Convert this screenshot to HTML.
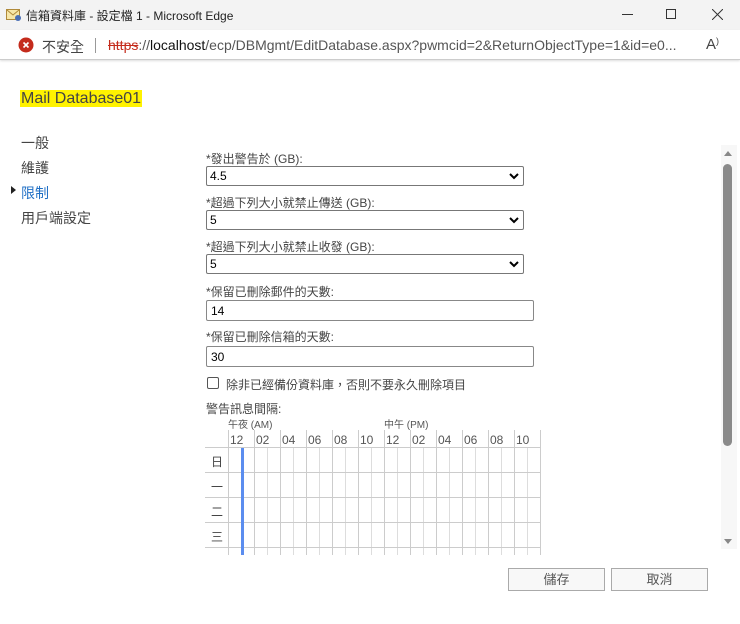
<!DOCTYPE html>
<html><head><meta charset="utf-8"><style>
*{margin:0;padding:0;box-sizing:border-box}
body{width:740px;height:624px;position:relative;background:#fff;font-family:"Liberation Sans","Noto Sans CJK TC",sans-serif;color:#333;overflow:hidden}
.a{position:absolute;white-space:nowrap}
.lbl{font-size:12px;color:#444}
.sel{position:absolute;left:206px;width:318px;height:20px;border:1px solid #777;border-radius:2px;font-size:12px;color:#000;padding:2px 3px}
.sel svg{position:absolute;right:4px;top:6px}
.inp{position:absolute;left:206px;width:328px;height:21px;border:1px solid #888;border-radius:2px;font-size:12px;color:#000;padding:3px 4px}
.nav{font-size:14px;color:#444;left:21px}
.btn{position:absolute;top:568px;width:97px;height:23px;border:1px solid #aaa;background:#f8f8f8;font-size:13px;color:#555;text-align:center;line-height:21px}
</style></head><body>
<div class="a" style="left:0;top:0;width:740px;height:30px;background:#f3f3f3"></div>
<svg class="a" style="left:6px;top:8px" width="16" height="14"><rect x="0.5" y="1.5" width="13" height="10" fill="#f7e7a8" stroke="#b08a3a"/><path d="M1 2 L7 7 L13 2" stroke="#b08a3a" fill="none"/><circle cx="12" cy="10" r="3" fill="#4a6fb5"/></svg>
<div class="a" style="left:26px;top:7px;font-size:12px;color:#222">信箱資料庫 - 設定檔 1 - Microsoft Edge</div>
<div class="a" style="left:622px;top:14px;width:11px;height:1px;background:#333"></div>
<div class="a" style="left:666px;top:9px;width:10px;height:10px;border:1px solid #333"></div>
<svg class="a" style="left:712px;top:9px" width="11" height="11"><path d="M0 0L11 11M11 0L0 11" stroke="#333"/></svg>
<div class="a" style="left:0;top:30px;width:740px;height:30px;background:#fff;border-bottom:1px solid #ccc;box-shadow:0 1px 2px #ddd"></div>
<svg class="a" style="left:18px;top:37px" width="16" height="16"><circle cx="8" cy="8" r="7.5" fill="#c42b1c"/><path d="M5.5 5.5L10.5 10.5M10.5 5.5L5.5 10.5" stroke="#fff" stroke-width="1.6"/></svg>
<div class="a" style="left:42px;top:37px;font-size:14px;color:#444">不安全</div>
<div class="a" style="left:95px;top:38px;width:1px;height:15px;background:#999"></div>
<div class="a" style="left:108px;top:37px;font-size:14px;color:#555"><span style="color:#c42b1c;text-decoration:line-through">https</span>://<span style="color:#111">localhost</span>/ecp/DBMgmt/EditDatabase.aspx?pwmcid=2&amp;ReturnObjectType=1&amp;id=e0...</div>
<div class="a" style="left:706px;top:36px;font-size:15px;color:#444">A<span style="font-size:9px;vertical-align:top">)</span></div>
<div class="a" style="left:20px;top:90px;font-size:16px;color:#444;background:#fff200;padding:0 1px;line-height:17px">Mail Database01</div>
<div class="a nav" style="top:133px">一般</div>
<div class="a nav" style="top:158px">維護</div>
<div class="a" style="left:11px;top:186px;width:0;height:0;border-left:5px solid #222;border-top:4px solid transparent;border-bottom:4px solid transparent"></div>
<div class="a nav" style="top:183px;color:#1f6fc5">限制</div>
<div class="a nav" style="top:208px">用戶端設定</div>

<div class="a lbl" style="left:206px;top:150px">*發出警告於 (GB):</div>
<div class="sel" style="top:166px">4.5<svg width="10" height="7"><path d="M1 1L5 5L9 1" stroke="#000" stroke-width="2" fill="none"/></svg></div>
<div class="a lbl" style="left:206px;top:194px">*超過下列大小就禁止傳送 (GB):</div>
<div class="sel" style="top:210px">5<svg width="10" height="7"><path d="M1 1L5 5L9 1" stroke="#000" stroke-width="2" fill="none"/></svg></div>
<div class="a lbl" style="left:206px;top:238px">*超過下列大小就禁止收發 (GB):</div>
<div class="sel" style="top:254px">5<svg width="10" height="7"><path d="M1 1L5 5L9 1" stroke="#000" stroke-width="2" fill="none"/></svg></div>
<div class="a lbl" style="left:206px;top:283px">*保留已刪除郵件的天數:</div>
<div class="inp" style="top:300px">14</div>
<div class="a lbl" style="left:206px;top:328px">*保留已刪除信箱的天數:</div>
<div class="inp" style="top:346px">30</div>
<div class="a" style="left:207px;top:377px;width:12px;height:12px;border:1px solid #555;border-radius:2px"></div>
<div class="a lbl" style="left:226px;top:376px">除非已經備份資料庫，否則不要永久刪除項目</div>
<div class="a lbl" style="left:206px;top:400px">警告訊息間隔:</div>
<div class="a" style="left:228px;top:416px;font-size:10px;color:#555">午夜 (AM)</div>
<div class="a" style="left:384px;top:416px;font-size:10px;color:#555">中午 (PM)</div>
<svg class="a" style="left:205px;top:430px" width="340" height="125">
<g stroke="#ccc" stroke-width="1">
<path d="M23.5 0V125M49.5 0V125M75.5 0V125M101.5 0V125M127.5 0V125M153.5 0V125M179.5 0V125M205.5 0V125M231.5 0V125M257.5 0V125M283.5 0V125M309.5 0V125M335.5 0V125"/>
<path d="M36.5 17V125M62.5 17V125M88.5 17V125M114.5 17V125M140.5 17V125M166.5 17V125M192.5 17V125M218.5 17V125M244.5 17V125M270.5 17V125M296.5 17V125M322.5 17V125" stroke="#ddd"/>
<path d="M0 17.5H335M0 42.5H335M0 67.5H335M0 92.5H335M0 117.5H335"/>
</g>
<rect x="36" y="18" width="3" height="107" fill="#5b8def"/>
<g font-size="12" fill="#555" font-family="Liberation Sans">
<text x="25" y="14">12</text><text x="51" y="14">02</text><text x="77" y="14">04</text><text x="103" y="14">06</text><text x="129" y="14">08</text><text x="155" y="14">10</text><text x="181" y="14">12</text><text x="207" y="14">02</text><text x="233" y="14">04</text><text x="259" y="14">06</text><text x="285" y="14">08</text><text x="311" y="14">10</text>
</g>
<g font-size="12" fill="#444" font-family="Noto Sans CJK TC"><text x="6" y="36">日</text><text x="6" y="61">一</text><text x="6" y="86">二</text><text x="6" y="111">三</text></g>
</svg>
<div class="a" style="left:721px;top:145px;width:16px;height:404px;background:#f7f7f7"></div>
<div class="a" style="left:723px;top:164px;width:9px;height:282px;background:#8a8a8a;border-radius:5px"></div>
<div class="a" style="left:724px;top:151px;border-left:4px solid transparent;border-right:4px solid transparent;border-bottom:5px solid #888"></div>
<div class="a" style="left:724px;top:539px;border-left:4px solid transparent;border-right:4px solid transparent;border-top:5px solid #888"></div>
<div class="btn" style="left:508px">儲存</div>
<div class="btn" style="left:611px">取消</div>
</body></html>
